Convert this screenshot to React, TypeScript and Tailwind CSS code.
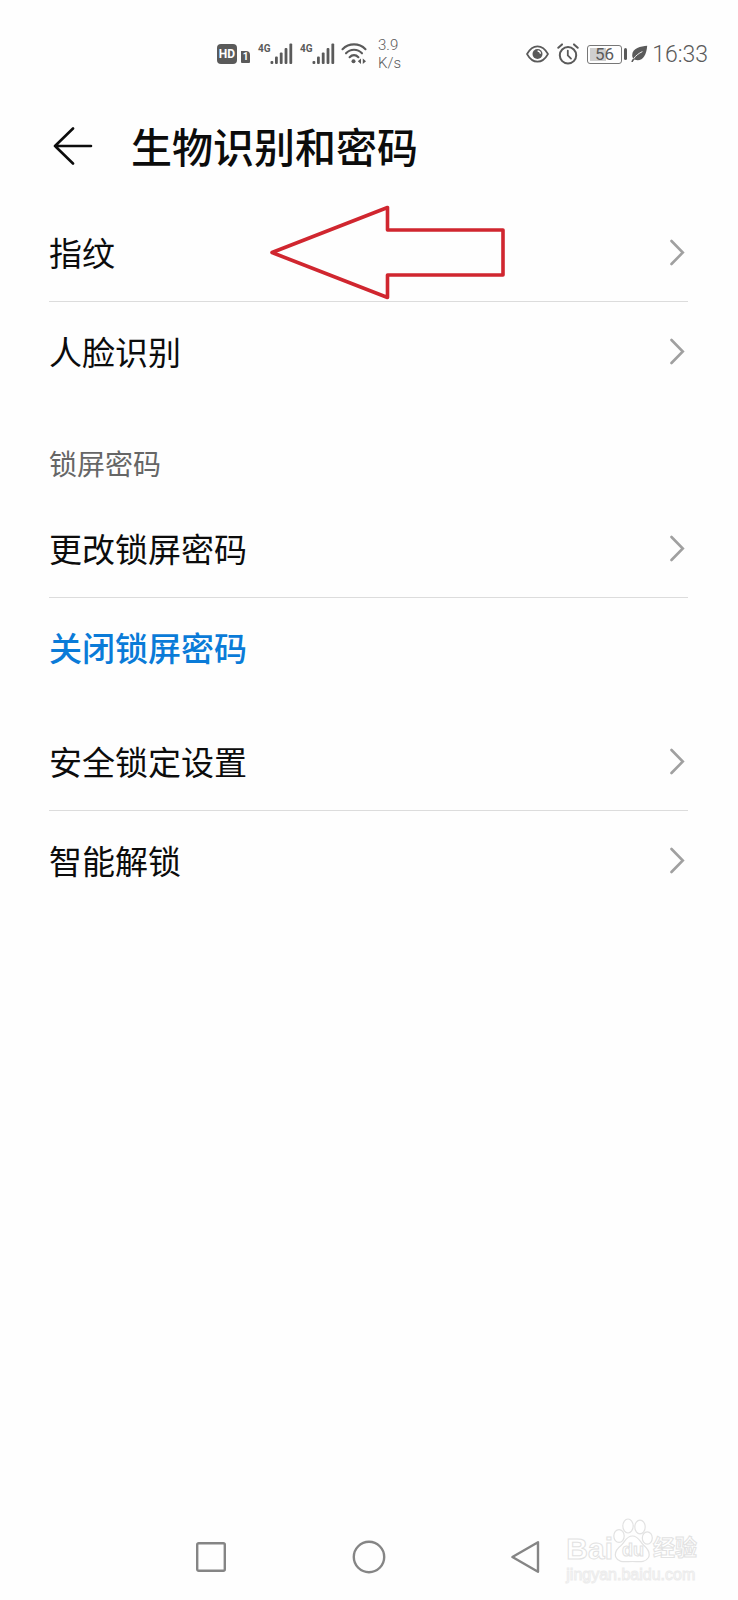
interface SettingRowProps {
  label: string
  divider?: boolean
  highlight?: boolean
  children?: React.ReactNode
}

function ChevronIcon() {
  return (
    <svg width="18" height="28" viewBox="0 0 18 28" fill="none" aria-hidden="true">
      <path d="M1.5 3 L12.8 14.5 L1.5 26" stroke="#a0a0a0" strokeWidth="2.6" strokeLinecap="round" />
    </svg>
  )
}

function SettingRow({ label, divider, highlight, children }: SettingRowProps) {
  return (
    <li className={divider ? 'relative border-b border-[#dcdcdc]' : 'relative'}>
      <button type="button" className="flex h-[98px] w-full items-center justify-between pb-px text-left">
        <span
          className={
            highlight
              ? 'text-[33px] leading-[48px] font-medium text-[#0a7bd8]'
              : 'text-[33px] leading-[48px] text-[#0c0c0c]'
          }
        >
          {label}
        </span>
        {!highlight && <ChevronIcon />}
      </button>
      {children}
    </li>
  )
}

function SignalIcon() {
  return (
    <div className="flex items-start">
      <span className="w-3 font-[Roboto] text-[10px] leading-[12px] font-bold">4G</span>
      <svg width="23" height="22" viewBox="0 0 23 22" aria-hidden="true">
        <g fill="#5a5a5a">
          <rect x="0.5" y="18" width="2.8" height="3" rx="1" />
          <rect x="5" y="13.5" width="2.8" height="7.5" rx="1" />
          <rect x="9.8" y="9.5" width="2.8" height="11.5" rx="1" />
          <rect x="14.6" y="5" width="2.8" height="16" rx="1" />
          <rect x="19.4" y="0.5" width="2.8" height="20.5" rx="1" />
        </g>
      </svg>
    </div>
  )
}

function WifiIcon() {
  return (
    <svg width="26" height="22" viewBox="0 0 26 22" fill="none" aria-hidden="true">
      <g stroke="#5a5a5a" strokeWidth="2.1" strokeLinecap="round">
        <path d="M1.5 6.2 C8 -0.2 18 -0.2 24.5 6.2" />
        <path d="M5 10.3 C9.5 5.6 16.5 5.6 21 10.3" />
        <path d="M8.6 14.2 C11.2 11.4 14.8 11.4 17.4 14.2" />
      </g>
      <circle cx="12.5" cy="18.3" r="2" fill="#5a5a5a" />
      <path d="M20 15.6 V21 L16.8 18.3 Z M21.8 15.6 V21 L25 18.3 Z" fill="#5a5a5a" />
    </svg>
  )
}

function StatusBar() {
  return (
    <div className="flex h-[106px] items-center justify-between pt-0.5 pr-[30px] pl-[217px] font-[Roboto] text-[#5a5a5a]">
      <div className="flex items-center">
        <span className="flex size-5 items-center justify-center rounded-[4px] bg-[#5a5a5a] text-[12px] leading-none font-bold text-white">
          HD
        </span>
        <span className="mt-1.5 ml-1 flex h-3 w-[9px] items-center justify-center rounded-tr-[4px] rounded-b-[1px] bg-[#5a5a5a] text-[10px] leading-none font-bold text-white">
          1
        </span>
        <div className="ml-2 flex gap-[7px]">
          <SignalIcon />
          <SignalIcon />
        </div>
        <div className="ml-1.5">
          <WifiIcon />
        </div>
        <div className="ml-[11px] text-[15px] leading-[18px] font-light">
          <div>3.9</div>
          <div>K/s</div>
        </div>
      </div>
      <div className="flex items-center">
        <svg width="23" height="18" viewBox="0 0 23 18" fill="none" aria-hidden="true">
          <path
            d="M1 9 C4 3.6 7.6 1.3 11.5 1.3 C15.4 1.3 19 3.6 22 9 C19 14.4 15.4 16.7 11.5 16.7 C7.6 16.7 4 14.4 1 9 Z"
            stroke="#5a5a5a"
            strokeWidth="1.7"
            strokeLinejoin="round"
          />
          <circle cx="11.5" cy="9" r="5" fill="#5a5a5a" />
          <path d="M11.6 6 A2.8 2.8 0 0 1 14.4 8.8" stroke="#fff" strokeWidth="1.3" />
        </svg>
        <svg className="ml-2" width="22" height="22" viewBox="0 0 22 22" fill="none" aria-hidden="true">
          <circle cx="11" cy="12.3" r="8.2" stroke="#5a5a5a" strokeWidth="2" />
          <path d="M10.8 7.6 V12.4 L14 15.6" stroke="#5a5a5a" strokeWidth="1.8" strokeLinecap="round" />
          <path d="M1.3 4.8 L5 1.4 M17 1.4 L20.7 4.8" stroke="#5a5a5a" strokeWidth="2" strokeLinecap="round" />
        </svg>
        <div className="ml-2 flex h-[19px] w-[35px] rounded-[3px] border border-[#777777] p-0.5">
          <span className="flex-1 bg-linear-to-r from-[#cfcfcf] from-56% to-transparent to-56% text-center text-[17px] leading-[13px]">
            56
          </span>
        </div>
        <span className="ml-0.5 h-3 w-[3px] rounded-sm bg-[#5a5a5a]" />
        <svg className="ml-1" width="17" height="18" viewBox="0 0 17 18" fill="none" aria-hidden="true">
          <path
            d="M16.2 0.8 C10 1.4 1.2 3 1.2 10.2 C1.2 11.6 1.6 12.6 2.2 13.4 C0.9 14.9 0.4 16 0.4 17 L1.8 17 C2.2 16.2 2.7 15.4 3.4 14.6 C10.8 17.2 15.4 11.4 16.2 0.8 Z"
            fill="#5a5a5a"
          />
          <path d="M2.6 13.8 C4.6 10.6 8 8.2 11.4 6.6" stroke="#fff" strokeWidth="0.9" />
        </svg>
        <span className="ml-1 pt-0.5 text-[23px] leading-[28px] font-light">16:33</span>
      </div>
    </div>
  )
}

function PointerArrow() {
  return (
    <svg
      className="pointer-events-none absolute top-px left-[220px]"
      width="238"
      height="96"
      viewBox="0 0 238 96"
      fill="none"
      aria-hidden="true"
    >
      <path
        d="M3 48.5 L118.5 3.5 V26 H234 V71 H118.5 V93.5 Z"
        stroke="#d0262f"
        strokeWidth="3.6"
        strokeLinejoin="round"
      />
    </svg>
  )
}

function NavBar() {
  return (
    <nav className="mt-auto grid h-[86px] grid-cols-3 items-center justify-items-center px-[132px]">
      <button type="button" aria-label="Recent apps">
        <svg width="34" height="34" viewBox="0 0 34 34" fill="none">
          <rect x="3.2" y="3.2" width="27.6" height="27.6" rx="1.5" stroke="#858585" strokeWidth="2.4" />
        </svg>
      </button>
      <button type="button" aria-label="Home">
        <svg width="34" height="34" viewBox="0 0 34 34" fill="none">
          <circle cx="17" cy="17" r="15.2" stroke="#858585" strokeWidth="2.4" />
        </svg>
      </button>
      <button type="button" aria-label="Back">
        <svg width="34" height="34" viewBox="0 0 34 34" fill="none">
          <path d="M2.4 17 L28 2.2 V31.8 Z" stroke="#858585" strokeWidth="2.4" strokeLinejoin="round" />
        </svg>
      </button>
    </nav>
  )
}

function Watermark() {
  return (
    <div className="pointer-events-none absolute right-[41px] bottom-3.5 font-['Liberation_Sans','Noto_Sans_CJK_SC',sans-serif] text-white [-webkit-text-stroke:1px_#e2e2e2]">
      <div className="flex items-end">
        <span className="text-[30px] leading-[30px] font-bold">Bai</span>
        <div className="relative">
          <svg width="40" height="46" viewBox="0 0 40 46" fill="#fff" stroke="#e2e2e2" strokeWidth="1.2" aria-hidden="true">
            <ellipse cx="6" cy="18" rx="5.2" ry="6.4" />
            <ellipse cx="15" cy="8" rx="5.2" ry="7" />
            <ellipse cx="27" cy="9" rx="5.2" ry="6.8" />
            <ellipse cx="34.3" cy="20" rx="5" ry="6.2" />
            <path d="M19.5 18 C13 18 12 24 8 27.5 C3 31.5 1 35 3 39.5 C5.5 45 12 43.5 19.5 43.5 C26 43.5 32 45 35.5 39.5 C37.5 35 35.5 31.5 31 27.5 C27 24 25.5 18 19.5 18 Z" />
          </svg>
          <span className="absolute inset-x-0 bottom-1 text-center text-[18px] leading-[20px] font-bold">du</span>
        </div>
        <span className="text-[22px] leading-[32px] font-bold">经验</span>
      </div>
      <div className="text-[16px] leading-[22px] [-webkit-text-stroke:1px_#ececec]">jingyan.baidu.com</div>
    </div>
  )
}

export default function App() {
  return (
    <div className="relative flex min-h-screen flex-col bg-[#fefefe] font-['Noto_Sans_CJK_SC',sans-serif]">
      <StatusBar />

      <header className="flex h-[82px] items-center gap-[37px] px-[50px]">
        <button type="button" aria-label="返回">
          <svg width="44" height="40" viewBox="0 0 44 40" fill="none">
            <path
              d="M41 19 H5 M23 1.5 L5 19 L23 36.5"
              stroke="#0c0c0c"
              strokeWidth="2.6"
              strokeLinecap="round"
              strokeLinejoin="round"
            />
          </svg>
        </button>
        <h1 className="pb-1 text-[41px] leading-[56px] font-medium text-[#0c0c0c]">生物识别和密码</h1>
      </header>

      <main className="pt-[15px] pr-[50px] pl-[49px]">
        <ul>
          <SettingRow label="指纹" divider>
            <PointerArrow />
          </SettingRow>
          <SettingRow label="人脸识别" />
        </ul>

        <section>
          <h2 className="pt-[43px] pb-4 text-[28px] leading-[40px] text-[#666666]">锁屏密码</h2>
          <ul>
            <SettingRow label="更改锁屏密码" divider />
            <SettingRow label="关闭锁屏密码" highlight />
          </ul>
        </section>

        <ul className="mt-4">
          <SettingRow label="安全锁定设置" divider />
          <SettingRow label="智能解锁" />
        </ul>
      </main>

      <NavBar />
      <Watermark />
    </div>
  )
}
